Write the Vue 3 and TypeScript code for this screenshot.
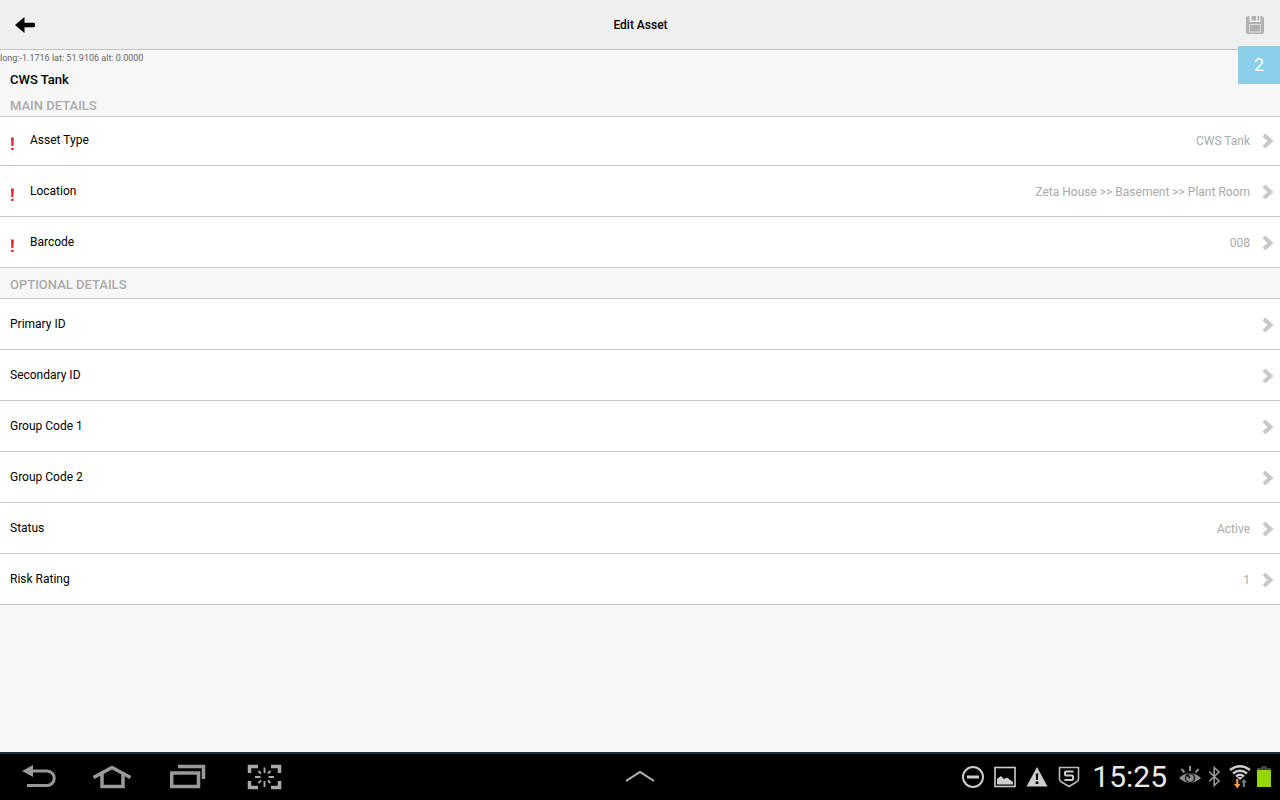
<script setup lang="ts">
interface Field {
  label: string
  value: string
}

interface Section {
  title: string
  required: boolean
  fields: Field[]
}

const sections: Section[] = [
  {
    title: 'MAIN DETAILS',
    required: true,
    fields: [
      { label: 'Asset Type', value: 'CWS Tank' },
      { label: 'Location', value: 'Zeta House >> Basement >> Plant Room' },
      { label: 'Barcode', value: '008' },
    ],
  },
  {
    title: 'OPTIONAL DETAILS',
    required: false,
    fields: [
      { label: 'Primary ID', value: '' },
      { label: 'Secondary ID', value: '' },
      { label: 'Group Code 1', value: '' },
      { label: 'Group Code 2', value: '' },
      { label: 'Status', value: 'Active' },
      { label: 'Risk Rating', value: '1' },
    ],
  },
]
</script>

<template>
  <div class="screen">
    <header class="topbar">
      <button class="icon-btn" aria-label="Back">
        <svg width="22" height="18" viewBox="0 0 22 18">
          <path d="M1 9 10.500 1V6.700H19.500Q21 6.700 21 8V10Q21 11.300 19.500 11.300H10.500V17Z" fill="#000" />
        </svg>
      </button>
      <h1>Edit Asset</h1>
      <button class="icon-btn" aria-label="Save">
        <svg width="20" height="20" viewBox="0 0 20 20">
          <path d="M3 1H4.500V7H15.500V1H17L19 3V17Q19 19 17 19H3Q1 19 1 17V3Q1 1 3 1Z" fill="#b1b1b1" />
          <path d="M6.500 1H11V5.500H6.500ZM12.500 1H14.200V5.500H12.500Z" fill="#b1b1b1" />
          <rect x="4.500" y="9.500" width="11" height="7.500" fill="#b1b1b1" stroke="#dedede" />
        </svg>
      </button>
      <span class="badge">2</span>
    </header>

    <main class="content">
      <p class="coords">long:-1.1716 lat: 51.9106 alt: 0.0000</p>
      <h2 class="asset">CWS Tank</h2>
      <section v-for="section in sections" :key="section.title" :class="{ main: section.required }">
        <h3>{{ section.title }}</h3>
        <ul>
          <li v-for="field in section.fields" :key="field.label">
            <button class="row">
              <svg v-if="section.required" class="alert" width="20" height="14" viewBox="0 0 20 14" aria-label="Required">
                <path d="M1 .5H3.800L3.400 9H1.400ZM1.200 10.800H3.600V13H1.200Z" fill="#e3202c" />
              </svg>
              <span class="label">{{ field.label }}</span>
              <span class="value">{{ field.value }}</span>
              <svg class="chevron" width="12" height="16" viewBox="0 0 12 16">
                <path d="M2 2 8.500 8 2 14" fill="none" stroke="#c8c8c8" stroke-width="4" />
              </svg>
            </button>
          </li>
        </ul>
      </section>
    </main>

    <nav class="navbar">
      <div class="keys">
        <button aria-label="Back key">
          <svg width="36" height="32" viewBox="0 0 36 32">
            <path d="M12 10H27A7.200 7.200 0 0 1 27 24.500H7" fill="none" stroke="#999" stroke-width="3" />
            <path d="M2 10 13 4V16Z" fill="#999" />
          </svg>
        </button>
        <button aria-label="Home">
          <svg width="40" height="32" viewBox="0 0 40 32">
            <path d="M1.500 16.500 20 6.500 38.500 16.500M10 13V25.500H31V13" fill="none" stroke="#999" stroke-width="3.500" />
          </svg>
        </button>
        <button aria-label="Recent apps">
          <svg width="40" height="32" viewBox="0 0 40 32">
            <path d="M3.700 12H30.500V25.500H3.700ZM10 5.500H35.500V18" fill="none" stroke="#999" stroke-width="3.500" />
          </svg>
        </button>
        <button aria-label="Screenshot">
          <svg width="40" height="32" viewBox="0 0 40 32">
            <path d="M5.500 12V5.500H14M27 5.500H35.500V12M35.500 20V26.500H27M14 26.500H5.500V20" fill="none" stroke="#aaa" stroke-width="3.500" />
            <path d="M20.500 6.500V12M20.500 20V26M11 16H16.500M24.500 16H30M14.500 10l2.500 2.500M26.500 10l-2.500 2.500M14.500 22l2.500-2.500M26.500 22l-2.500-2.500" fill="none" stroke="#aaa" stroke-width="1.800" />
          </svg>
        </button>
      </div>

      <button class="up" aria-label="Open mini apps">
        <svg width="30" height="16" viewBox="0 0 30 16">
          <path d="M1 12 15 3 29 12" fill="none" stroke="#b5b5b5" stroke-width="2" />
        </svg>
      </button>

      <div class="status">
        <div class="notices">
          <svg width="22" height="22" viewBox="0 0 22 22">
            <circle cx="11" cy="11" r="10" fill="none" stroke="#ccc" stroke-width="2" />
            <path d="M5 11H17" stroke="#ccc" stroke-width="3" />
          </svg>
          <svg width="22" height="22" viewBox="0 0 22 22">
            <rect x="1" y="1.500" width="20" height="19" fill="none" stroke="#ccc" stroke-width="1.600" />
            <path d="M3 18.500V13L7 10 10 13 13 11.500 19 16V18.500Z" fill="#ccc" />
          </svg>
          <svg width="22" height="22" viewBox="0 0 22 22">
            <path d="M11 1 21.500 20.500H.5Z" fill="#ccc" />
            <path d="M9.700 7.500H12.300L11.800 14H10.200ZM9.700 15.500H12.300V18H9.700Z" fill="#000" />
          </svg>
          <svg width="22" height="22" viewBox="0 0 22 22">
            <path d="M1.500 1.500H20.500V13Q20.500 15 18.500 16L11 20.500 3.500 16Q1.500 15 1.500 13Z" fill="none" stroke="#bbb" stroke-width="1.600" />
            <path d="M15.500 5.500H8Q7 5.500 7 6.500V8.500Q7 9.500 8 9.500H14Q15 9.500 15 10.500V13Q15 14 14 14H6.500" fill="none" stroke="#ccc" stroke-width="2" />
          </svg>
        </div>
        <time>15:25</time>
        <div class="system">
          <svg width="24" height="22" viewBox="0 0 24 22">
            <path d="M0 12Q11 2 22 12Q11 22 0 12Z" fill="#8d8d8d" />
            <circle cx="11" cy="12" r="4.500" fill="#8d8d8d" stroke="#222" stroke-width="1.500" />
            <path d="M11 12 8 8.500" stroke="#111" stroke-width="2" />
            <path d="M11 0V5M2.500 3 5.500 6.500M19.500 3 16.500 6.500" stroke="#8d8d8d" stroke-width="2" />
          </svg>
          <svg width="14" height="22" viewBox="0 0 14 22">
            <path d="M0 5.500 10 15 5.200 19.500V1.500L10 6 0 15.500" fill="none" stroke="#999" stroke-width="1.600" />
          </svg>
          <svg width="22" height="24" viewBox="0 0 22 24">
            <path d="M1 5Q11-2.500 21 5M4 8.500Q11 3 18 8.500M7 11.500Q11 8 15 11.500" fill="none" stroke="#ccc" stroke-width="2.400" />
            <path d="M8 12H14L11 15Z" fill="#ccc" />
            <path d="M9.300 14V19H11.500L8.300 23.500 5 19H7.200V14Z" fill="#f7a043" />
            <path d="M13.800 22V17.500H12L15 14 18 17.500H16V22Z" fill="#777" />
          </svg>
          <svg width="14" height="24" viewBox="0 0 14 24">
            <path d="M4 1H10V3H14V6H0V3H4Z" fill="#444" />
            <rect y="5" width="14" height="17" fill="#94d500" />
          </svg>
        </div>
      </div>
    </nav>
  </div>
</template>

<style>
body {
  margin: 0;
}
</style>

<style scoped>
.screen {
  display: flex;
  flex-direction: column;
  min-height: 100vh;
  background: #f7f7f7;
  color: #000;
  font-family: Roboto, 'Liberation Sans', sans-serif;
  font-size: 12px;
}

button {
  border: 0;
  padding: 0;
  background: none;
  color: inherit;
  font: inherit;
  cursor: pointer;
}

svg {
  display: block;
  flex: none;
}

h1,
h2,
h3,
p,
ul {
  margin: 0;
  padding: 0;
}

ul {
  list-style: none;
}

.topbar {
  position: relative;
  display: flex;
  align-items: center;
  justify-content: space-between;
  height: 49px;
  padding: 0 15px 0 14px;
  border-bottom: 1px solid #c3c3c3;
  background: #efefef;
}

.icon-btn {
  display: flex;
}

h1 {
  font-size: 12px;
  font-weight: 500;
  line-height: 16px;
}

.badge {
  position: absolute;
  top: 46px;
  right: 0;
  width: 42px;
  background: #8ccfeb;
  color: #fff;
  font-size: 18px;
  line-height: 38px;
  text-align: center;
}

.content {
  flex: 1;
}

.coords {
  color: #666;
  font-size: 9px;
  line-height: 16px;
}

.asset {
  padding: 5px 10px 3px;
  font-size: 13px;
  font-weight: 500;
  line-height: 18px;
}

h3 {
  padding: 8px 10px 4px;
  border-bottom: 1px solid #c8c8c8;
  color: #aaa;
  font-size: 13px;
  font-weight: 500;
  line-height: 18px;
}

.main h3 {
  padding: 5px 10px 1px;
}

.row {
  display: flex;
  align-items: center;
  width: 100%;
  height: 51px;
  padding: 0 6px 0 10px;
  border-bottom: 1px solid #c8c8c8;
  background: #fff;
  line-height: 16px;
  text-align: left;
}

.main li:first-child .row {
  height: 49px;
  padding-bottom: 2px;
}

.alert {
  margin-top: 8px;
}

.value {
  flex: 1;
  padding: 2px 12px 0 0;
  color: #aaa;
  text-align: right;
}

.chevron {
  margin-top: 2px;
}

.navbar {
  display: grid;
  grid-template-columns: 1fr auto 1fr;
  align-items: center;
  height: 46px;
  border-top: 2px solid #182c3a;
  background: #000;
}

.keys {
  display: flex;
  gap: 36px;
  padding-left: 20px;
}

.status {
  display: flex;
  align-items: center;
  justify-content: flex-end;
  gap: 12px;
  padding-right: 9px;
  color: #e8e8e8;
}

.notices {
  display: flex;
  gap: 10px;
}

time {
  font-size: 30px;
  line-height: 40px;
}

.system {
  display: flex;
  align-items: center;
  gap: 6px;
}
</style>
